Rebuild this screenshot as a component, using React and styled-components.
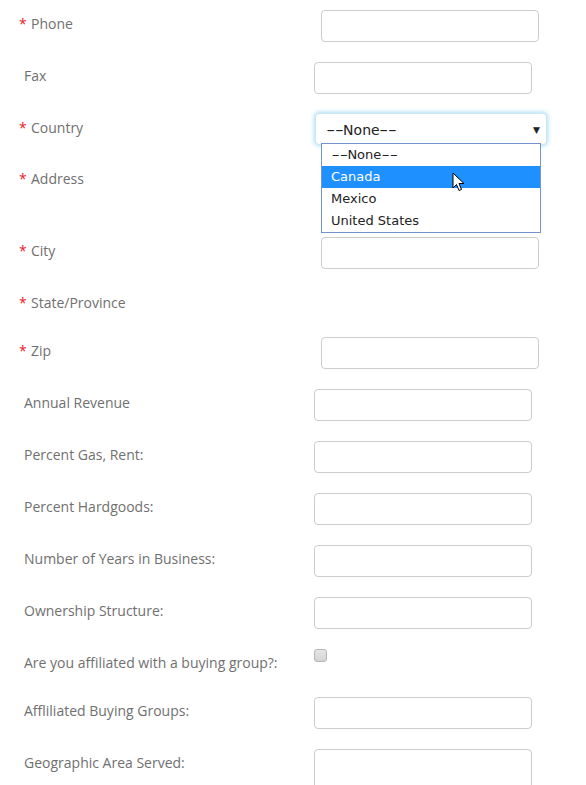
import React from "react";
import styled, { createGlobalStyle } from "styled-components";

const Global = createGlobalStyle`
  html, body { margin: 0; padding: 0; background: #fff; }
  body { font-family: "Open Sans", "Liberation Sans", sans-serif; }
`;

const Form = styled.form`
  display: flex;
  flex-direction: column;
  gap: 20px;
  padding-top: 10px;
`;

const Row = styled.div`
  display: flex;
  align-items: flex-start;
  padding-left: ${(p) => (p.$required ? 19 : 24)}px;
`;

const Star = styled.span`
  width: 12px;
  flex: none;
  color: #e8202a;
  font-size: 14px;
  line-height: 20px;
  padding-top: 4px;
`;

const Label = styled.label`
  width: 290px;
  flex: none;
  padding: 4px 0 4px;
  font-size: 14px;
  line-height: 20px;
  color: #707070;
`;

const Input = styled.input`
  box-sizing: border-box;
  width: 218px;
  height: ${(p) => p.$h || 32}px;
  margin: 0;
  border: 1px solid #ccc;
  border-radius: 4px;
  background: #fff;
`;

const TextArea = styled.textarea`
  box-sizing: border-box;
  width: 218px;
  height: ${(p) => p.$h || 52}px;
  margin: 0;
  border: 1px solid #ccc;
  border-radius: 4px;
  resize: none;
`;

const SelectWrap = styled.div`
  position: relative;
  margin-left: -6px;
  margin-top: -1px;
`;

const SelectBox = styled.div`
  box-sizing: border-box;
  width: 232px;
  height: 32px;
  display: flex;
  align-items: center;
  justify-content: space-between;
  padding: 1px 6px 0 10px;
  border: 1px solid #c9e6f2;
  border-radius: 4px;
  box-shadow: 0 0 4px 1px rgba(140, 210, 240, 0.7);
  font-family: "DejaVu Sans", Verdana, sans-serif;
  font-size: 14px;
  color: #222;
  background: #fff;
`;

const Dash = styled.span`
  display: inline-block;
  transform: scaleX(1.75);
  margin: 0 ${(p) => p.$m}px;
`;

const Arrow = styled.span`
  font-size: 9px;
  color: #222;
`;

const List = styled.ul`
  position: absolute;
  left: 6px;
  top: 30px;
  box-sizing: border-box;
  width: 220px;
  margin: 0;
  padding: 0;
  list-style: none;
  border: 1px solid #7393cf;
  background: #fff;
  z-index: 5;
`;

const Option = styled.li`
  height: 22px;
  line-height: 22px;
  padding-left: 9px;
  font-family: "DejaVu Sans", Verdana, sans-serif;
  font-size: 13px;
  color: ${(p) => (p.$active ? "#fff" : "#222")};
  background: ${(p) => (p.$active ? "#1e90ff" : "transparent")};
`;

const Cursor = styled.svg`
  position: absolute;
  left: 130px;
  top: 28px;
  width: 13px;
  height: 20px;
`;

const Check = styled.span`
  box-sizing: border-box;
  display: block;
  width: 13px;
  height: 13px;
  border: 1px solid #b5b5b5;
  border-radius: 3px;
  background: linear-gradient(#e6e6e6, #d4d4d4);
`;

const fields1 = [
  { label: "Phone", req: true },
  { label: "Fax" },
];

const fields2 = [
  { label: "Annual Revenue" },
  { label: "Percent Gas, Rent:" },
  { label: "Percent Hardgoods:" },
  { label: "Number of Years in Business:" },
  { label: "Ownership Structure:" },
];

function Field({ label, req, children }) {
  return (
    <Row $required={req}>
      {req && <Star>*</Star>}
      <Label>{label}</Label>
      {children}
    </Row>
  );
}

function NoneText({ m }) {
  return (
    <span>
      <Dash $m={m}>--</Dash>None<Dash $m={m}>--</Dash>
    </span>
  );
}

export default function App() {
  return (
    <>
      <Global />
      <Form onSubmit={(e) => e.preventDefault()}>
        {fields1.map((f) => (
          <Field key={f.label} label={f.label} req={f.req}>
            <Input />
          </Field>
        ))}
        <Field label="Country" req>
          <SelectWrap>
            <SelectBox>
              <NoneText m={3.5} />
              <Arrow>▼</Arrow>
            </SelectBox>
            <List>
              <Option>
                <NoneText m={3.5} />
              </Option>
              <Option $active>
                Canada
                <Cursor viewBox="0 0 13 20">
                  <path
                    d="M1 1 L1 16 L4.5 12.5 L7 18.5 L9.5 17.5 L7 11.5 L12 11.5 Z"
                    fill="#fff"
                    stroke="#000"
                    strokeWidth="1"
                    strokeLinejoin="miter"
                  />
                </Cursor>
              </Option>
              <Option>Mexico</Option>
              <Option>United States</Option>
            </List>
          </SelectWrap>
        </Field>
        <Field label="Address" req>
          <TextArea $h={52} />
        </Field>
        <Field label="City" req>
          <Input />
        </Field>
        <Field label="State/Province" req />
        <Field label="Zip" req>
          <Input />
        </Field>
        {fields2.map((f) => (
          <Field key={f.label} label={f.label}>
            <Input />
          </Field>
        ))}
        <Field label="Are you affiliated with a buying group?:">
          <Check />
        </Field>
        <Field label="Affliliated Buying Groups:">
          <Input />
        </Field>
        <Field label="Geographic Area Served:">
          <TextArea $h={60} />
        </Field>
      </Form>
    </>
  );
}
